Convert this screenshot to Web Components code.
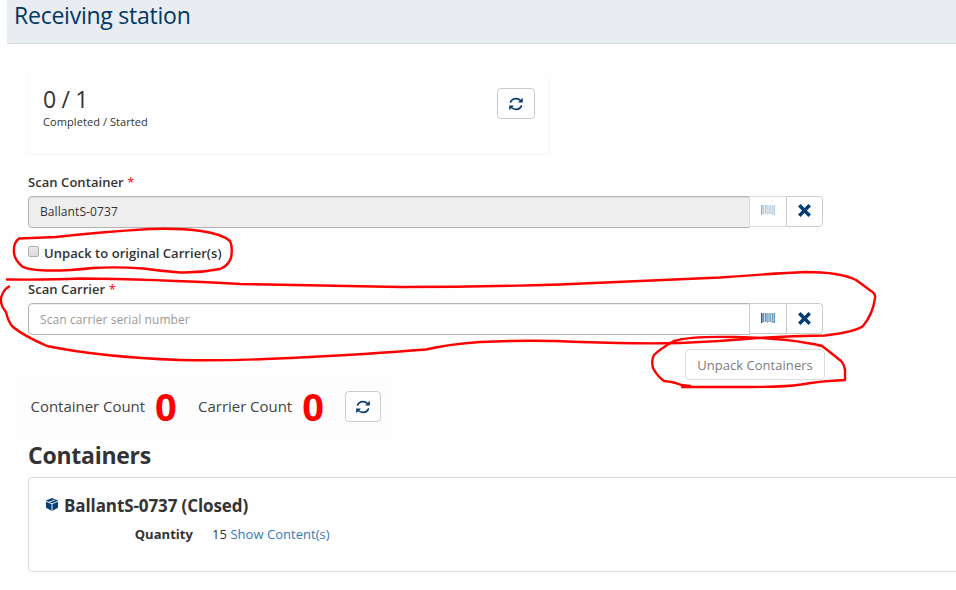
<!DOCTYPE html>
<html lang="en">
<head>
<meta charset="utf-8">
<title>Receiving station</title>
<style>
html,body{margin:0;background:#fefefe;overflow:hidden;height:590px}
body{font-family:"Open Sans",sans-serif;color:#333}
</style>
</head>
<body>
<receiving-app></receiving-app>
<script>
const ICONS = {
  refresh: ['0 0 14 14', 14, 14, '<path fill="none" stroke="#053c72" stroke-width="1.600" d="M1.300 5.600C2.300 3 4.300 1.600 7 1.600c2 0 3.500.7 4.800 2.100M12.700 8.400C11.700 11 9.700 12.400 7 12.400c-2 0-3.500-.7-4.800-2.100"/><path fill="#053c72" d="M13.800.8v4.800H9zM.2 13.200V8.400H5z"/>'],
  times: ['0 0 13 13', 13, 13, '<path fill="none" stroke="#053c72" stroke-width="3.500" d="M1.300 1.300l10.400 10.400M11.700 1.300L1.300 11.700"/>'],
  barcode: ['0 0 14 10', 14, 10, '<path fill="#0b55a8" d="M0 0h1.500v10H0z"/><path fill="#5d8fc0" d="M2 0h1.300v9H2zM4 0h1.600v9H4z"/><path fill="#7fb4dd" d="M6 0h1.200v10H6zM9 0h1.300v9H9z"/><path fill="#7793a0" d="M7.500 0h1.200v9H7.500zM10.700 0h1.200v10h-1.200z"/><path fill="#5793cb" d="M12.500 0H14v10h-1.500z"/>'],
  cube: ['0 0 12 13', 12, 13, '<path fill="#0a4077" d="M6 0l6 2.500v7.300L6 13 0 9.800V2.500z"/><path stroke="#fefefe" stroke-width=".9" fill="none" d="M0 3.300l6 2.400 6-2.400M6 5.700V13M2.800 4.300L8.800 1.800"/>']
};
function define(name, html, setup) {
  customElements.define(name, class extends HTMLElement {
    connectedCallback() {
      if (this.shadowRoot) return;
      const t = document.createElement('template');
      t.innerHTML = html;
      this.attachShadow({mode: 'open'}).append(t.content.cloneNode(true));
      if (setup) setup(this, this.shadowRoot);
    }
  });
}

define('ui-icon', '<style>:host{display:block;line-height:0}svg{display:block}</style><div></div>', (el, root) => {
  const [box, w, h, shape] = ICONS[el.getAttribute('name')];
  root.querySelector('div').innerHTML = `<svg viewBox="${box}" width="${w}" height="${h}">${shape}</svg>`;
});

define('ui-button', `<style>
:host{display:block;box-sizing:border-box;height:31px;width:38px}
button{all:unset;box-sizing:border-box;width:100%;height:100%;display:flex;align-items:center;justify-content:center;border:1px solid #ccc;border-radius:4px;background:#fff;font:13px/18px "Open Sans",sans-serif;color:#333;padding-bottom:var(--lift,1px)}
:host([disabled]) button{border-color:#dedede}
:host([disabled]) ::slotted(ui-icon){opacity:.45}
:host([middle]) button{border-radius:0}
:host([end]) button{border-radius:0 4px 4px 0}
:host([middle]),:host([end]){margin-left:-1px}
</style><button><slot></slot></button>`);

define('page-header', `<style>
:host{display:block;box-sizing:border-box;height:44px;margin-left:7px;padding-left:7px;background:#e9ecf1;border-bottom:1px solid #d9dde6}
h1{margin:0;font-weight:400;font-size:23px;line-height:31px;color:#003865;letter-spacing:-.24px}
</style><h1><slot></slot></h1>`);

define('progress-card', `<style>
:host{display:flex;justify-content:space-between;box-sizing:border-box;width:522px;height:81px;margin-top:30px;padding:13px 15px 0 14px;border:1px solid #f6f6f6;border-top-color:transparent;border-radius:4px}
.n{font-size:23px;font-weight:400;line-height:22px;letter-spacing:-.3px}
.c{font-size:11px;line-height:16px;margin-top:4px;letter-spacing:.08px}
ui-button{margin-right:-1px}
</style><div><div class="n">0 / 1</div><div class="c">Completed / Started</div></div><ui-button style="--lift:0"><ui-icon name="refresh"></ui-icon></ui-button>`);

define('scan-field', `<style>
:host{display:block;width:795px}
label{display:block;font-weight:600;font-size:13px;line-height:18px;height:23px;letter-spacing:.06px}
b{font-weight:400;color:#f00}
.row{display:flex;align-items:flex-start}
.in{box-sizing:border-box;width:722px;height:32px;border:1px solid #b3b3b3;border-radius:4px 0 0 4px;padding-left:11px;font-size:12px;line-height:31px;box-shadow:inset 0 1px 1px rgba(0,0,0,.075);background:#fff;color:#999;letter-spacing:.09px}
:host([locked]) .in{background:#eee;color:#333;line-height:30px}
</style><label></label><div class="row"><div class="in"><slot></slot></div><ui-button class="scan" middle style="--lift:2px"><ui-icon name="barcode"></ui-icon></ui-button><ui-button end style="width:37px"><ui-icon name="times"></ui-icon></ui-button></div>`, (el, root) => {
  root.querySelector('label').innerHTML = el.getAttribute('label') + ' <b>*</b>';
  if (el.hasAttribute('locked')) {
    root.querySelector('.scan').setAttribute('disabled', '');
    for (const b of root.querySelectorAll('ui-button')) b.style.setProperty('--lift', '3px');
  }
});

define('carrier-option', `<style>
:host{display:flex;align-items:flex-start;margin-top:15px;height:37px;font-size:13px;font-weight:600;line-height:20px;letter-spacing:.04px}
i{box-sizing:border-box;width:11px;height:11px;margin:3px 5px 0 0;border:1px solid #adadad;border-radius:2px;background:linear-gradient(#e9e9e9,#dadada)}
</style><i></i><span><slot></slot></span>`);

define('count-bar', `<style>
:host{display:flex;align-items:flex-start;margin:3px 0 0 -10px;width:374px;height:52px;padding-left:12.500px;box-sizing:border-box;background:#fdfdfd;font-size:15px;color:#444}
b{font-size:38px;line-height:40px;color:#f00;font-weight:700;margin:3px 0 0 10px;width:43px}
.l{margin-top:13px;line-height:20px;white-space:nowrap;letter-spacing:-.03px}
ui-button{width:36px;margin-top:8px;--lift:0}
</style><span class="l">Container Count</span><b>0</b><span class="l">Carrier Count</span><b>0</b><ui-button><ui-icon name="refresh"></ui-icon></ui-button>`);

define('container-panel', `<style>
:host{display:block;box-sizing:border-box;width:960px;height:95px;border:1px solid #d9d9d9;border-radius:4px;background:#fefefe;padding:17px 0 0 16px}
.t{display:flex;font-size:17px;line-height:22px;font-weight:700;letter-spacing:-.1px}
.t ui-icon{margin:3px 6px 0 1px}
.q{display:grid;grid-template-columns:148px 1fr;column-gap:19px;margin-top:7px;font-size:13px;line-height:20px}
.q b{text-align:right;font-weight:700;letter-spacing:.04px}
.q span{letter-spacing:.04px}
a{color:#337ab7}
</style><div class="t"><ui-icon name="cube"></ui-icon><span><slot></slot></span></div><div class="q"><b>Quantity</b><span>15 <a>Show Content(s)</a></span></div>`);

define('ink-marks', `<style>
:host{position:absolute;left:0;top:0;pointer-events:none}
svg{display:block}
</style><svg width="956" height="590" viewBox="0 0 956 590" fill="none" stroke="#f00" stroke-width="2.400" stroke-linecap="round" stroke-linejoin="round">
<path d="M19 238.500L56 237Q100 232 150 229Q180 228 201 231Q222 234 230 241Q233 247 231 258Q228 266 220 269Q200 273 180 272.500Q160 271 143 268.500Q115 266.500 93 268Q65 271 46 270.500Q30 270 23 267Q15 261 14 253Q13 243 19 238.500"/>
<path d="M9 286.500Q3 290 1 298Q0 305 6 312Q8 321 12 326Q22 335 47 346Q100 357 180 360Q230 361 290 358Q370 354 426 349.500Q450 344 480 342Q530 339.500 580 342Q640 344 680 343Q720 341.500 758 338Q790 336 825 335.500Q855 332 863 326Q873 314 875 298Q876 294 871 291Q863 285 856 280Q840 272 805 272Q780 273 720 277.500Q640 281 560 284.500Q480 287 400 287Q320 285.500 240 284Q150 279 80 278.500Q50 280 7 279.500"/>
<path d="M682 387L750 387Q785 387 801 384.500Q820 381 845 380V370Q844 364 841 361Q830 352 822 346Q815 344 807 343Q780 338 735 337Q690 336 674 341Q660 349 654 355Q651 360 653 368Q657 376 664 381Q675 382 681 385L690 386"/>
</svg>`);

define('receiving-app', `<style>
:host{display:block;position:relative;width:956px;height:590px;overflow:hidden}
main{padding-left:28px}
h2{margin:4px 0 5px;font-size:23px;line-height:33px;font-weight:700;letter-spacing:-.25px}
.go{width:140px;margin:14px 0 0 657px;--lift:0}
</style>
<page-header>Receiving station</page-header>
<main>
<progress-card></progress-card>
<scan-field label="Scan Container" locked style="margin-top:18px">BallantS-0737</scan-field>
<carrier-option>Unpack to original Carrier(s)</carrier-option>
<scan-field label="Scan Carrier">Scan carrier serial number</scan-field>
<ui-button class="go" disabled><span style="opacity:.65;letter-spacing:.04px">Unpack Containers</span></ui-button>
<count-bar></count-bar>
<h2>Containers</h2>
<container-panel>BallantS-0737 (Closed)</container-panel>
</main>
<ink-marks></ink-marks>`);
</script>
</body>
</html>
